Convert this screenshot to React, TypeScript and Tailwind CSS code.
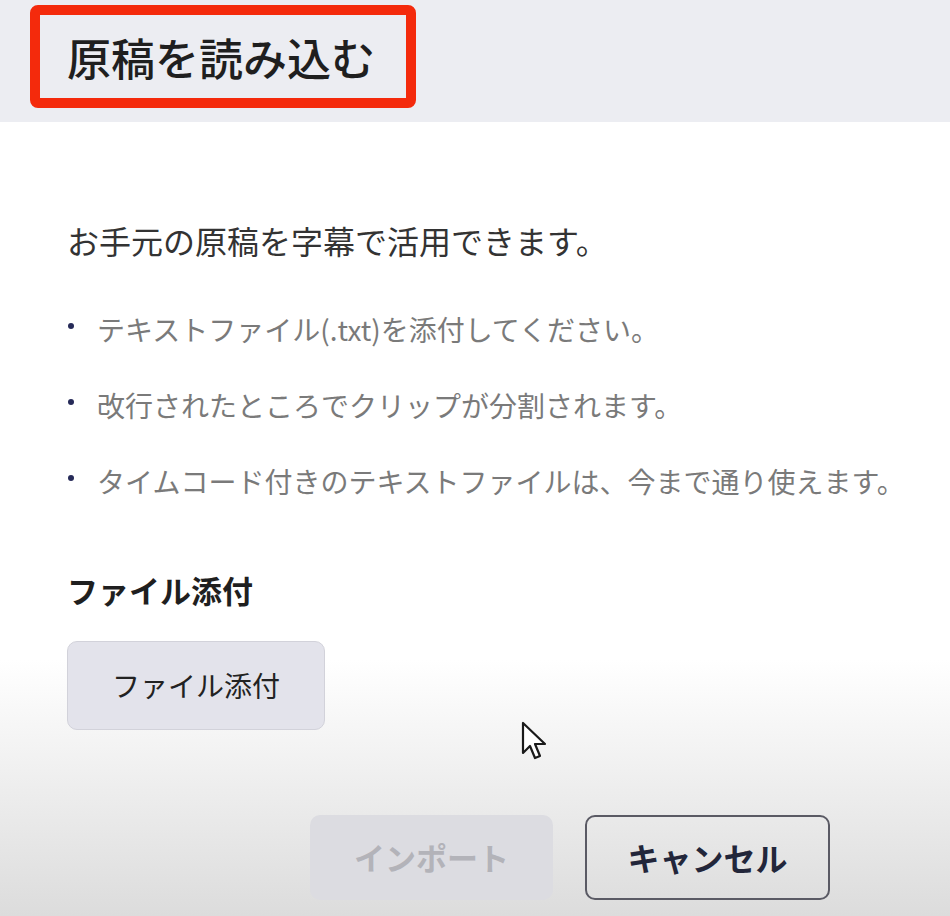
import React from "react";

const notes = [
  "テキストファイル(.txt)を添付してください。",
  "改行されたところでクリップが分割されます。",
  "タイムコード付きのテキストファイルは、今まで通り使えます。",
];

function Cursor() {
  return (
    <svg
      className="absolute left-[519px] top-[720px]"
      width="32"
      height="44"
      viewBox="0 0 32 44"
      fill="none"
    >
      <path
        d="M4 3 L4 33 L11 26 L16 38 L21 36 L16 24 L26 24 Z"
        fill="#ffffff"
        stroke="#1a1a1a"
        strokeWidth="2.2"
        strokeLinejoin="round"
      />
    </svg>
  );
}

export default function App() {
  return (
    <div className="relative h-[916px] w-[950px] overflow-hidden bg-[linear-gradient(to_bottom,#ffffff_0px,#ffffff_660px,#dcdcdc_916px)] font-['Noto_Sans_CJK_JP','Noto_Sans',sans-serif]">
      {/* header */}
      <div className="h-[122px] bg-[#ecedf2] pl-[30px] pt-[5px]">
        <div className="flex h-[103px] w-[386px] items-center rounded-lg border-[10px] border-[#f42a0c] pl-[27px]">
          <h1 className="text-[44px] font-medium leading-none text-[#1f1f1f]">原稿を読み込む</h1>
        </div>
      </div>

      <div className="px-[67px]">
        <p className="mt-[94px] text-[32px] leading-[1.5] text-[#333333]">
          お手元の原稿を字幕で活用できます。
        </p>

        <ul className="mt-[27px]">
          {notes.map((n) => (
            <li key={n} className="flex h-[76px] items-center whitespace-nowrap">
              <span className="mb-[7px] ml-[1px] h-[6px] w-[6px] shrink-0 rounded-full bg-[#262a58]" />
              <span className="ml-[23px] text-[28px] leading-none text-[#7a7a7a]">{n}</span>
            </li>
          ))}
        </ul>

        <h2 className="mt-[48px] text-[31px] font-bold leading-[1.5] text-[#1f1f1f]">ファイル添付</h2>

        <button className="mt-[27px] flex h-[89px] w-[258px] items-center justify-center rounded-[10px] border border-[#d2d2da] bg-[#e3e3eb] text-[28px] text-[#222222]">
          ファイル添付
        </button>
      </div>

      {/* footer actions */}
      <div className="mt-[85px] flex justify-end gap-[32px] pr-[120px]">
        <button
          disabled
          className="flex h-[85px] w-[243px] items-center justify-center rounded-[10px] bg-[#dcdce1] text-[31px] font-bold text-[#b3b3b9]"
        >
          インポート
        </button>
        <button className="flex h-[85px] w-[245px] items-center justify-center rounded-[10px] border-2 border-[#5a5a64] text-[32px] font-bold text-[#22263a]">
          キャンセル
        </button>
      </div>

      <Cursor />
    </div>
  );
}
